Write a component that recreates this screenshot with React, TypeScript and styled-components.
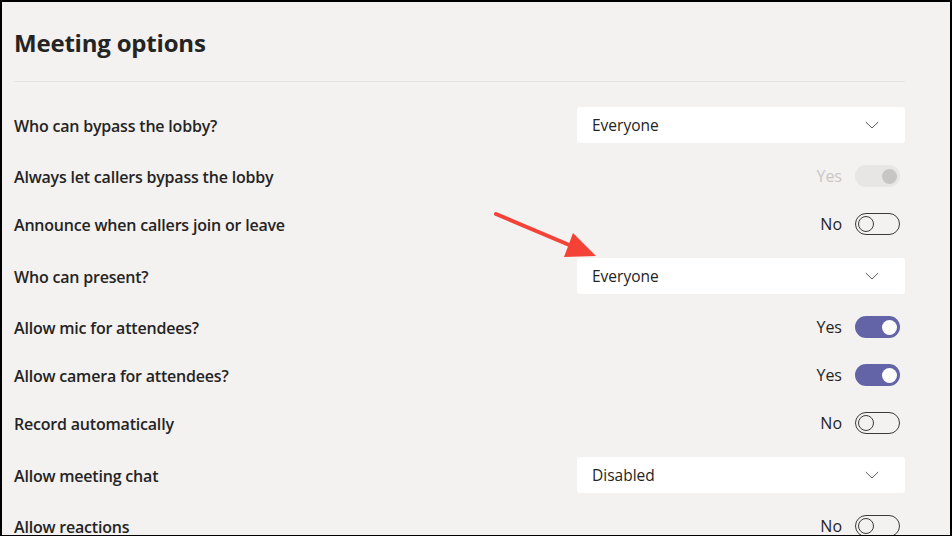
import React from "react";
import styled, { createGlobalStyle } from "styled-components";

const Global = createGlobalStyle`
  html, body { margin: 0; padding: 0; background: #000; }
  body { font-family: "Open Sans", "Noto Sans", sans-serif; }
`;

const Frame = styled.div`
  position: relative;
  width: 952px;
  height: 536px;
  box-sizing: border-box;
  border-style: solid;
  border-color: #000;
  border-width: 2px 2px 1px 2px;
  background: #f3f2f1;
  overflow: hidden;
`;

const Content = styled.div`
  padding: 0 45px 0 12px;
  display: flex;
  flex-direction: column;
`;

const Title = styled.h1`
  margin: 0;
  height: 80px;
  box-sizing: border-box;
  padding-top: 25px;
  font-size: 24px;
  line-height: 32px;
  font-weight: 700;
  color: #252423;
  letter-spacing: -0.2px;
  border-bottom: 1px solid #e6e4e2;
`;

const List = styled.div`
  display: flex;
  flex-direction: column;
  padding-top: 15px;
`;

const Row = styled.div<{ $tall?: boolean }>`
  display: flex;
  align-items: center;
  justify-content: space-between;
  height: ${(p) => (p.$tall ? 55 : 48)}px;
  flex-shrink: 0;
`;

const Label = styled.span`
  font-size: 16px;
  font-weight: 600;
  color: #252423;
  letter-spacing: -0.2px;
  padding-top: 2px;
`;

const Select = styled.div`
  width: 328px;
  height: 36px;
  box-sizing: border-box;
  background: #fff;
  border-radius: 3px;
  display: flex;
  align-items: center;
  justify-content: space-between;
  padding: 0 26px 0 15px;
  font-size: 15.5px;
  color: #252423;
`;

const Chevron = () => (
  <svg width="14" height="8" viewBox="0 0 14 8" fill="none">
    <path d="M0.8 1l6.2 6 6.2-6" stroke="#605e5c" strokeWidth="1" />
  </svg>
);

const ToggleGroup = styled.div`
  display: flex;
  align-items: center;
  gap: 13px;
  padding-right: 5px;
`;

const ToggleText = styled.span<{ $disabled?: boolean }>`
  font-size: 16px;
  color: ${(p) => (p.$disabled ? "#c8c6c4" : "#252423")};
`;

type Mode = "on" | "off" | "disabled";

const Track = styled.div<{ $mode: Mode }>`
  width: 45px;
  height: 22px;
  box-sizing: border-box;
  border-radius: 11px;
  display: flex;
  align-items: center;
  padding: 0 ${(p) => (p.$mode === "off" ? 1.5 : 3)}px;
  justify-content: ${(p) => (p.$mode === "off" ? "flex-start" : "flex-end")};
  background: ${(p) =>
    p.$mode === "on" ? "#6264a7" : p.$mode === "disabled" ? "#e8e6e4" : "transparent"};
  border: ${(p) => (p.$mode === "off" ? "1.5px solid #3b3a39" : "none")};
`;

const Knob = styled.div<{ $mode: Mode }>`
  width: ${(p) => (p.$mode === "off" ? 16 : 15)}px;
  height: ${(p) => (p.$mode === "off" ? 16 : 15)}px;
  box-sizing: border-box;
  border-radius: 50%;
  background: ${(p) =>
    p.$mode === "on" ? "#fff" : p.$mode === "disabled" ? "#c8c6c4" : "transparent"};
  border: ${(p) => (p.$mode === "off" ? "1.5px solid #3b3a39" : "none")};
`;

const Toggle = ({ mode, text }: { mode: Mode; text: string }) => (
  <ToggleGroup>
    <ToggleText $disabled={mode === "disabled"}>{text}</ToggleText>
    <Track $mode={mode}>
      <Knob $mode={mode} />
    </Track>
  </ToggleGroup>
);

const ArrowOverlay = styled.svg`
  position: absolute;
  left: 0;
  top: 0;
  pointer-events: none;
`;

type Item =
  | { label: string; kind: "select"; value: string }
  | { label: string; kind: "toggle"; mode: Mode; text: string };

const items: Item[] = [
  { label: "Who can bypass the lobby?", kind: "select", value: "Everyone" },
  { label: "Always let callers bypass the lobby", kind: "toggle", mode: "disabled", text: "Yes" },
  { label: "Announce when callers join or leave", kind: "toggle", mode: "off", text: "No" },
  { label: "Who can present?", kind: "select", value: "Everyone" },
  { label: "Allow mic for attendees?", kind: "toggle", mode: "on", text: "Yes" },
  { label: "Allow camera for attendees?", kind: "toggle", mode: "on", text: "Yes" },
  { label: "Record automatically", kind: "toggle", mode: "off", text: "No" },
  { label: "Allow meeting chat", kind: "select", value: "Disabled" },
  { label: "Allow reactions", kind: "toggle", mode: "off", text: "No" },
];

export default function App() {
  return (
    <>
      <Global />
      <Frame>
        <Content>
          <Title>Meeting options</Title>
          <List>
            {items.map((it) => (
              <Row key={it.label} $tall={it.kind === "select"}>
                <Label>{it.label}</Label>
                {it.kind === "select" ? (
                  <Select>
                    {it.value}
                    <Chevron />
                  </Select>
                ) : (
                  <Toggle mode={it.mode} text={it.text} />
                )}
              </Row>
            ))}
          </List>
        </Content>
        <ArrowOverlay width="952" height="536" viewBox="0 0 952 536">
          <line x1="494" y1="212" x2="572" y2="245" stroke="#f44336" strokeWidth="4" strokeLinecap="round" />
          <polygon points="594,254 571,231 562,255" fill="#f44336" />
        </ArrowOverlay>
      </Frame>
    </>
  );
}
